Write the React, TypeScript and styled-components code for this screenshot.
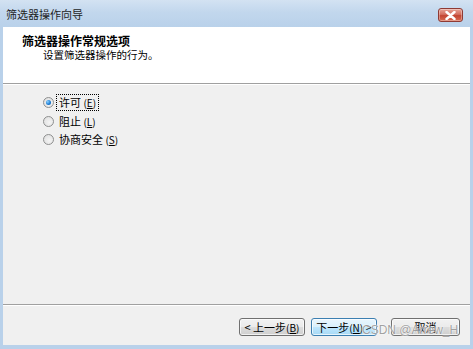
import React from 'react';
import styled, { createGlobalStyle } from 'styled-components';

const GlobalStyle = createGlobalStyle`
  html, body {
    margin: 0;
    padding: 0;
    background: #ffffff;
  }
  body {
    font-family: "Noto Sans CJK SC", "Liberation Sans", sans-serif;
  }
`;

const Window = styled.div`
  display: flex;
  flex-direction: column;
  width: 473px;
  height: 349px;
  box-sizing: border-box;
  padding: 0 3px 4px 3px;
  background: #b9d1ea;
  overflow: hidden;
`;

const TitleBar = styled.div`
  display: flex;
  align-items: flex-start;
  justify-content: space-between;
  height: 27px;
  margin: 0 -3px;
  padding: 0 10px 0 6px;
  box-sizing: border-box;
  background: linear-gradient(180deg, #d3e2f2 0%, #c2d7ed 45%, #b9d1ea 100%);
`;

const TitleText = styled.span`
  margin-top: 6px;
  font-size: 11px;
  line-height: 16px;
  color: #1e1e1e;
`;

const CloseButton = styled.div`
  display: flex;
  align-items: center;
  justify-content: center;
  width: 25px;
  height: 14px;
  margin-top: 8px;
  box-sizing: border-box;
  border: 1px solid #8e3a34;
  border-radius: 3px;
  background: linear-gradient(180deg, #e8a497 0%, #d36d5d 45%, #c24532 55%, #d86b52 100%);
  box-shadow: inset 0 0 0 1px rgba(255, 255, 255, 0.35);
`;

const Client = styled.div`
  display: flex;
  flex-direction: column;
  flex: 1;
  background: #f0f0f0;
`;

const Header = styled.div`
  height: 56px;
  box-sizing: border-box;
  padding: 7px 0 0 19px;
  background: #ffffff;
`;

const HeaderTitle = styled.div`
  font-size: 12px;
  line-height: 14px;
  font-weight: 700;
  color: #000;
`;

const HeaderSub = styled.div`
  padding-left: 21px;
  font-size: 10.5px;
  line-height: 13px;
  color: #000;
`;

const Separator = styled.div`
  height: 0;
  border-top: 1px solid #a0a0a0;
  border-bottom: 1px solid #ffffff;
`;

const Body = styled.div`
  flex: 1;
  display: flex;
  flex-direction: column;
  padding: 8.5px 0 0 40px;
`;

const RadioRow = styled.label`
  display: flex;
  align-items: center;
  height: 18.6px;
  font-size: 11px;
  color: #000;
`;

const RadioCircle = styled.span<{ $checked?: boolean }>`
  position: relative;
  width: 11px;
  height: 11px;
  box-sizing: border-box;
  margin-right: 3px;
  border: 1px solid #8e8f8f;
  border-radius: 50%;
  background: radial-gradient(circle at 60% 60%, #f4f4f4 0%, #dcdcdc 100%);

  &::after {
    content: '';
    display: ${(p) => (p.$checked ? 'block' : 'none')};
    position: absolute;
    left: 2px;
    top: 2px;
    width: 5px;
    height: 5px;
    border-radius: 50%;
    background: radial-gradient(circle at 35% 35%, #8ed2ff 0%, #1c7ed6 55%, #0b4f9e 100%);
  }
`;

const RadioLabel = styled.span<{ $focused?: boolean }>`
  padding: 1px 2px;
  line-height: 13px;
  outline: ${(p) => (p.$focused ? '1px dotted #000' : 'none')};
`;

const Mnemonic = styled.span`
  font-size: 10px;
  u {
    text-underline-offset: 1px;
  }
`;

const Footer = styled.div`
  position: relative;
  display: flex;
  justify-content: flex-end;
  align-items: flex-start;
  height: 39px;
  box-sizing: border-box;
  padding: 12px 10px 0 0;
`;

const Button = styled.div<{ $width: number; $default?: boolean; $gap?: number }>`
  display: flex;
  align-items: center;
  justify-content: center;
  width: ${(p) => p.$width}px;
  height: 18px;
  margin-left: ${(p) => p.$gap ?? 0}px;
  box-sizing: border-box;
  border: 1px solid ${(p) => (p.$default ? '#3c7fb1' : '#707070')};
  border-radius: 3px;
  background: ${(p) =>
    p.$default
      ? 'linear-gradient(180deg, #eaf6fd 0%, #d9f0fc 50%, #bee6fd 51%, #a7d9f5 100%)'
      : 'linear-gradient(180deg, #f2f2f2 0%, #ebebeb 50%, #dddddd 51%, #cfcfcf 100%)'};
  box-shadow: inset 0 0 0 1px rgba(255, 255, 255, 0.7);
  font-size: 11px;
  color: #000;
  white-space: nowrap;
`;

const Watermark = styled.span`
  position: absolute;
  left: 359px;
  top: 17px;
  font-family: "Liberation Sans", Arial, sans-serif;
  font-size: 12px;
  line-height: 14px;
  color: rgba(120, 120, 120, 0.7);
  text-shadow: 0 0 2px #ffffff, 0 0 1px #ffffff;
  pointer-events: none;
`;

const options = [
  { label: '许可', key: 'E', checked: true },
  { label: '阻止', key: 'L', checked: false },
  { label: '协商安全', key: 'S', checked: false },
];

const App = () => {
  return (
    <>
      <GlobalStyle />
      <Window>
        <TitleBar>
          <TitleText>筛选器操作向导</TitleText>
          <CloseButton>
            <svg width="11" height="9" viewBox="0 0 11 9">
              <path
                d="M1.5 1 L9.5 8 M9.5 1 L1.5 8"
                stroke="#ffffff"
                strokeWidth="2.4"
                strokeLinecap="round"
              />
            </svg>
          </CloseButton>
        </TitleBar>
        <Client>
          <Header>
            <HeaderTitle>筛选器操作常规选项</HeaderTitle>
            <HeaderSub>设置筛选器操作的行为。</HeaderSub>
          </Header>
          <Separator />
          <Body>
            {options.map((o) => (
              <RadioRow key={o.key}>
                <RadioCircle $checked={o.checked} />
                <RadioLabel $focused={o.checked}>
                  {o.label} <Mnemonic>(<u>{o.key}</u>)</Mnemonic>
                </RadioLabel>
              </RadioRow>
            ))}
          </Body>
          <Separator />
          <Footer>
            <Button $width={66}>
              &lt; 上一步 <Mnemonic>(<u>B</u>)</Mnemonic>
            </Button>
            <Button $width={66} $gap={6} $default>
              下一步 <Mnemonic>(<u>N</u>)</Mnemonic>&nbsp;&gt;
            </Button>
            <Button $width={69} $gap={14}>
              取消
            </Button>
            <Watermark>CSDN @Arrew_H</Watermark>
          </Footer>
        </Client>
      </Window>
    </>
  );
};

export default App;
